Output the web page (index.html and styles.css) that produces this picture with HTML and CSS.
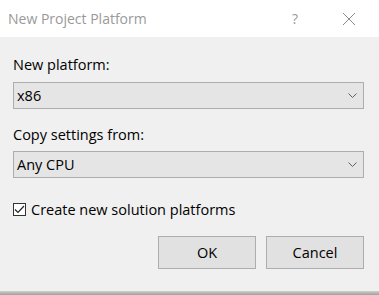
FILE: index.html
```html
<!DOCTYPE html>
<html lang="en">
<head>
  <meta charset="UTF-8">
  <title>New Project Platform</title>
  <link rel="stylesheet" href="styles.css">
</head>
<body>

  <div class="dialog">
    <!-- TITLE BAR -->
    <div class="titlebar">
      <span class="title">New Project Platform</span>
      <span class="help">?</span>
      <svg class="close" width="14" height="14" viewBox="0 0 14 14">
        <path d="M1 1 L13 13 M13 1 L1 13" stroke="#8a8a8a" stroke-width="1" fill="none"/>
      </svg>
    </div>

    <!-- CONTENT -->
    <div class="content">
      <div class="label">New platform:</div>
      <div class="combo">
        <span>x86</span>
        <svg class="chev" width="9" height="6" viewBox="0 0 9 6">
          <path d="M0.5 0.5 L4.5 4.5 L8.5 0.5" stroke="#606060" stroke-width="1" fill="none"/>
        </svg>
      </div>

      <div class="label second">Copy settings from:</div>
      <div class="combo">
        <span>Any CPU</span>
        <svg class="chev" width="9" height="6" viewBox="0 0 9 6">
          <path d="M0.5 0.5 L4.5 4.5 L8.5 0.5" stroke="#606060" stroke-width="1" fill="none"/>
        </svg>
      </div>

      <label class="check">
        <span class="box">
          <svg width="11" height="11" viewBox="0 0 11 11">
            <path d="M1 5.5 L4 8.5 L10 2" stroke="#222" stroke-width="1.2" fill="none"/>
          </svg>
        </span>
        Create new solution platforms
      </label>

      <div class="buttons">
        <button>OK</button>
        <button>Cancel</button>
      </div>
    </div>
    <div class="bottom"></div>
  </div>

</body>
</html>
```

FILE: styles.css
```css
body {
  margin: 0;
  font-family: "Open Sans", "Noto Sans", sans-serif;
  background-color: #f0f0f0;
}

.dialog {
  width: 379px;
  height: 295px;
  display: flex;
  flex-direction: column;
  background-color: #f0f0f0;
}

.titlebar {
  height: 37px;
  background-color: #fff;
  display: flex;
  align-items: center;
  padding-left: 8px;
  color: #999;
  font-size: 14px;
}

.title {
  flex: 1;
}

.help {
  font-size: 14px;
  margin-right: 44px;
}

.close {
  margin-right: 23px;
}

.content {
  flex: 1;
  padding: 18px 15px 0 13px;
  font-size: 14.5px;
  color: #000;
}

.label {
  height: 20px;
  line-height: 20px;
  margin-bottom: 7px;
}

.label.second {
  margin-top: 16px;
  margin-bottom: 6px;
}

.combo {
  height: 25px;
  border: 1px solid #adadad;
  background-color: #e5e5e5;
  display: flex;
  align-items: center;
  padding: 0 6px 0 3px;
}

.combo span {
  flex: 1;
}

.check {
  display: flex;
  align-items: center;
  gap: 5px;
  margin-top: 23px;
  height: 16px;
}

.box {
  width: 13px;
  height: 13px;
  border: 1px solid #333;
  box-sizing: border-box;
  background-color: #fff;
  display: flex;
  align-items: center;
  justify-content: center;
}

.buttons {
  display: flex;
  justify-content: flex-end;
  gap: 10px;
  margin-top: 19px;
}

button {
  width: 98px;
  height: 33px;
  border: 1px solid #adadad;
  background-color: #e1e1e1;
  font-family: "Open Sans", "Noto Sans", sans-serif;
  font-size: 14.5px;
  color: #000;
  padding: 0;
}

.bottom {
  height: 4px;
  background: linear-gradient(#cfcfcf, #a0a0a0);
}
```
